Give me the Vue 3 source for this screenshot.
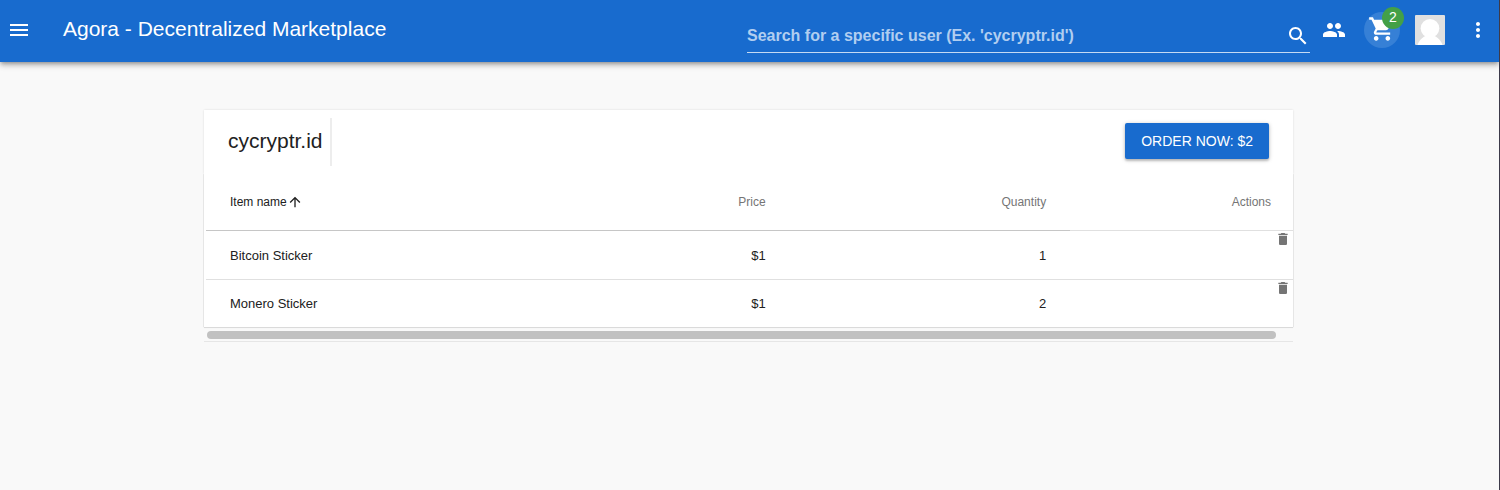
<script setup>
import { ref, computed } from 'vue'

const query = ref('')
const seller = 'cycryptr.id'
const items = ref([
  { name: 'Bitcoin Sticker', price: '$1', quantity: 1 },
  { name: 'Monero Sticker', price: '$1', quantity: 2 }
])
const total = ref(2)
const cartCount = computed(() => items.value.length)

function removeItem(index) {
  items.value.splice(index, 1)
}
</script>

<template>
  <div class="page">
    <header class="toolbar">
      <button class="icon-button menu" type="button" aria-label="Menu">
        <svg viewBox="0 0 24 24"><path d="M3 18h18v-2H3v2zm0-5h18v-2H3v2zm0-7v2h18V6H3z" /></svg>
      </button>
      <h1 class="title">Agora - Decentralized Marketplace</h1>
      <form class="search" role="search" @submit.prevent>
        <input
          v-model="query"
          type="text"
          aria-label="Search for a specific user"
          placeholder="Search for a specific user (Ex. 'cycryptr.id')"
        />
        <button class="icon-button" type="submit" aria-label="Search">
          <svg viewBox="0 0 24 24"><path d="M15.5 14h-.79l-.28-.27C15.41 12.59 16 11.11 16 9.5 16 5.91 13.09 3 9.5 3S3 5.91 3 9.5 5.91 16 9.5 16c1.61 0 3.09-.59 4.23-1.57l.27.28v.79l5 4.99L20.49 19l-4.99-5zm-6 0C7.01 14 5 11.99 5 9.5S7.01 5 9.5 5 14 7.01 14 9.5 11.99 14 9.5 14z" /></svg>
        </button>
      </form>
      <nav class="actions">
        <button class="icon-button" type="button" aria-label="Contacts">
          <svg viewBox="0 0 24 24"><path d="M16 11c1.66 0 2.99-1.34 2.99-3S17.66 5 16 5c-1.66 0-3 1.34-3 3s1.34 3 3 3zm-8 0c1.66 0 2.99-1.34 2.99-3S9.66 5 8 5C6.34 5 5 6.34 5 8s1.34 3 3 3zm0 2c-2.33 0-7 1.17-7 3.5V19h14v-2.5c0-2.33-4.67-3.5-7-3.5zm8 0c-.29 0-.62.02-.97.05 1.16.84 1.97 1.97 1.97 3.45V19h6v-2.5c0-2.33-4.67-3.5-7-3.5z" /></svg>
        </button>
        <button class="cart" type="button" aria-label="Cart">
          <svg viewBox="0 0 24 24"><path d="M7 18c-1.1 0-1.99.9-1.99 2S5.900 22 7 22s2-.9 2-2-.9-2-2-2zM1 2v2h2l3.600 7.590-1.350 2.450c-.16.28-.25.61-.25.96 0 1.100.9 2 2 2h12v-2H7.420c-.14 0-.25-.11-.25-.25l.03-.12.900-1.630h7.450c.75 0 1.410-.41 1.750-1.030l3.580-6.490c.08-.14.12-.31.12-.48 0-.55-.45-1-1-1H5.210l-.94-2H1zm16 16c-1.100 0-1.990.9-1.990 2s.89 2 1.990 2 2-.9 2-2-.9-2-2-2z" /></svg>
          <span class="badge">{{ cartCount }}</span>
        </button>
        <button class="avatar" type="button" aria-label="Account">
          <svg viewBox="0 0 30 30">
            <rect width="30" height="30" fill="#e0e0e0" />
            <circle cx="15" cy="13.300" r="9.300" fill="#fff" />
            <path d="M2.500 30C4 25.500 8 21.500 11 21h8c3 .5 7 4.500 8.500 9z" fill="#fff" />
          </svg>
        </button>
        <button class="icon-button" type="button" aria-label="More">
          <svg viewBox="0 0 24 24"><path d="M12 8c1.1 0 2-.9 2-2s-.9-2-2-2-2 .9-2 2 .9 2 2 2zm0 2c-1.1 0-2 .9-2 2s.9 2 2 2 2-.9 2-2-.9-2-2-2zm0 6c-1.1 0-2 .9-2 2s.9 2 2 2 2-.9 2-2-.9-2-2-2z" /></svg>
        </button>
      </nav>
    </header>

    <main class="content">
      <section class="order">
        <div class="order-head">
          <h2>{{ seller }}</h2>
          <button class="order-button" type="button">ORDER NOW: ${{ total }}</button>
        </div>
        <div class="table-wrap">
          <table>
            <thead>
              <tr>
                <th class="name sorted">
                  <span class="sort">Item name<svg viewBox="0 0 24 24"><path d="M4 12l1.410 1.410L11 7.830V20h2V7.830l5.580 5.590L20 12l-8-8-8 8z" /></svg></span>
                </th>
                <th class="price">Price</th>
                <th class="quantity">Quantity</th>
                <th class="tools">Actions</th>
              </tr>
            </thead>
            <tbody>
              <tr v-for="(item, index) in items" :key="item.name">
                <td class="name">{{ item.name }}</td>
                <td>{{ item.price }}</td>
                <td>{{ item.quantity }}</td>
                <td class="tools">
                  <button class="remove" type="button" :aria-label="'Remove ' + item.name" @click="removeItem(index)">
                    <svg viewBox="0 0 24 24"><path d="M6 19c0 1.100.9 2 2 2h8c1.100 0 2-.9 2-2V7H6v12zM19 4h-3.500l-1-1h-5l-1 1H5v2h14V4z" /></svg>
                  </button>
                </td>
              </tr>
            </tbody>
          </table>
        </div>
        <div class="scroll-track"><div class="scroll-thumb"></div></div>
      </section>
    </main>
  </div>
</template>

<style>
body {
  background: #f9f9f9;
}
</style>

<style scoped>
.page {
  box-sizing: border-box;
  min-height: 100vh;
  border-right: 1px solid #3c3a4a;
  background: #f9f9f9;
  color: #212121;
  font-family: "Liberation Sans", Arial, sans-serif;
}

button {
  margin: 0;
  padding: 0;
  border: 0;
  background: none;
  color: inherit;
  font: inherit;
  cursor: pointer;
}

svg {
  display: block;
  fill: currentColor;
}

.toolbar {
  box-sizing: border-box;
  display: flex;
  align-items: center;
  height: 62px;
  padding: 0 9px 2px 7px;
  background: #186bce;
  color: #fff;
  box-shadow: 0 2px 4px -1px rgba(0, 0, 0, 0.3), 0 4px 5px rgba(0, 0, 0, 0.14), 0 1px 10px rgba(0, 0, 0, 0.1);
  clip-path: inset(0 0 -16px 0);
}

.icon-button,
.icon-button svg {
  width: 24px;
  height: 24px;
}

.title {
  flex: 1;
  margin: 0 0 0 32px;
  padding-bottom: 2px;
  font-size: 21px;
  font-weight: 400;
  line-height: 26px;
  white-space: nowrap;
}

.search {
  display: flex;
  align-items: center;
  width: 38%;
  max-width: 563px;
  height: 32px;
  margin-top: 13px;
  border-bottom: 1px solid #c5daf3;
}

.search input {
  flex: 1;
  min-width: 0;
  height: 32px;
  padding: 0;
  border: 0;
  outline: 0;
  background: none;
  color: #fff;
  font: bold 16px "Liberation Sans", Arial, sans-serif;
}

.search input::placeholder {
  color: #b1cef0;
  opacity: 1;
}

.actions {
  display: flex;
  align-items: center;
  margin-left: 12px;
}

.cart {
  position: relative;
  display: flex;
  justify-content: center;
  width: 36px;
  height: 36px;
  margin-left: 18px;
  padding-top: 3px;
  border-radius: 50%;
  background: #3680d6;
}

.cart svg {
  width: 28px;
  height: 28px;
}

.badge {
  position: absolute;
  top: -5px;
  right: -4px;
  width: 22px;
  height: 22px;
  border-radius: 50%;
  background: #43a047;
  font-size: 14px;
  line-height: 20px;
  text-align: center;
}

.avatar {
  width: 30px;
  height: 30px;
  margin: 0 21px 0 15px;
  border-radius: 1px;
  overflow: hidden;
}

.content {
  padding: 48px 206px 48px 204px;
}

.order {
  border-bottom: 1px solid #e6e6e6;
}

.order-head {
  display: flex;
  align-items: center;
  justify-content: space-between;
  box-sizing: border-box;
  height: 64px;
  padding: 0 24px;
  background: #fff;
  box-shadow: 0 0 2px rgba(0, 0, 0, 0.12);
  clip-path: inset(-2px -2px 0 -2px);
}

.order-head h2 {
  margin: 0;
  padding: 0 7px 2px 0;
  border-right: 2px solid #ededed;
  font-size: 21px;
  font-weight: 400;
  line-height: 46px;
}

.order-button {
  height: 36px;
  margin-bottom: 2px;
  padding: 0 16px;
  border-radius: 2px;
  background: #186bce;
  color: #fff;
  font-size: 14px;
  box-shadow: 0 1px 4px rgba(0, 0, 0, 0.25), 0 2px 2px rgba(0, 0, 0, 0.14);
}

.table-wrap {
  padding-left: 2px;
  background: #fff;
  box-shadow: 0 0 1px rgba(0, 0, 0, 0.4), 0 1px 1px rgba(0, 0, 0, 0.06);
  clip-path: inset(0 -3px -3px -3px);
}

table {
  width: 100%;
  border-collapse: separate;
  border-spacing: 0;
  table-layout: fixed;
}

th {
  box-sizing: border-box;
  height: 57px;
  padding: 0 24px;
  border-bottom: 1px solid #c6c6c6;
  color: #757575;
  font-size: 12px;
  font-weight: 400;
  text-align: right;
}

th.name {
  width: 27.9%;
}

th.price {
  width: 25.8%;
}

th.quantity {
  width: 25.8%;
}

th.tools {
  padding-right: 22px;
  border-bottom-color: #e0e0e0;
}

th.sorted {
  color: #212121;
}

.sort {
  display: flex;
  align-items: center;
}

.sort svg {
  width: 16px;
  height: 16px;
}

td {
  box-sizing: border-box;
  height: 49px;
  padding: 0 24px;
  border-bottom: 1px solid #e0e0e0;
  font-size: 13px;
  text-align: right;
}

tbody tr:last-child td {
  height: 47px;
  border-bottom: 0;
}

.name {
  text-align: left;
}

td.tools {
  padding: 0 2px 0 0;
  vertical-align: top;
}

.remove {
  display: block;
  margin-left: auto;
  color: #757575;
}

.remove svg {
  width: 16px;
  height: 16px;
}

.scroll-track {
  padding: 4px 17px 2px 3px;
}

.scroll-thumb {
  height: 8px;
  border-radius: 4px;
  background: #c1c1c1;
}
</style>
